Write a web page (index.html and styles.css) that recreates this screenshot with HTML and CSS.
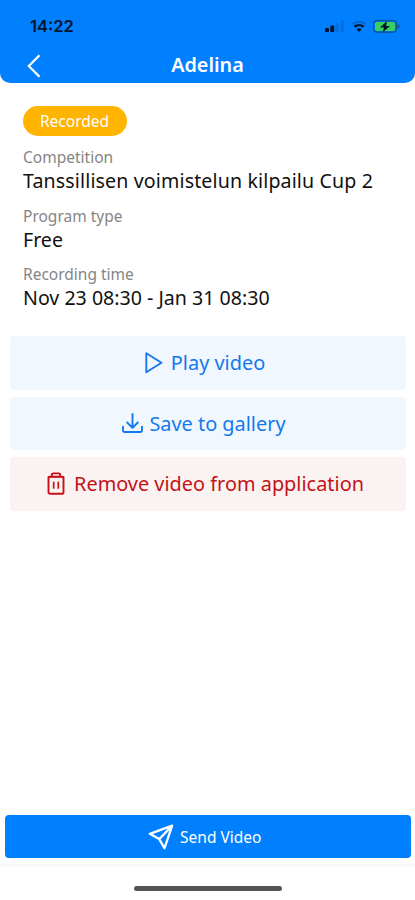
FILE: index.html
```html
<!DOCTYPE html>
<html lang="en">
<head>
<meta charset="utf-8">
<title>Adelina</title>
<link rel="stylesheet" href="styles.css">
</head>
<body>
<div class="screen">
  <header class="header">
    <div class="status">
      <span class="clock">14:22</span>
      <div class="indicators">
        <svg class="signal" width="20" height="12" viewBox="0 0 20 12">
          <rect x="0" y="8" width="4" height="4" rx="1" fill="#03152c"/>
          <rect x="5.2" y="5.5" width="4" height="6.5" rx="1" fill="#03152c"/>
          <rect x="10.5" y="3" width="3" height="9" rx="1" fill="#0570da"/>
          <rect x="15.7" y="0" width="3" height="12" rx="1" fill="#0570da"/>
        </svg>
        <svg class="wifi" width="16" height="12" viewBox="0 0 16 12" fill="none">
          <path d="M1.5 4.2a10 10 0 0 1 13 0" stroke="#0765c6" stroke-width="2"/>
          <path d="M3.5 6.8a6.8 6.8 0 0 1 9 0" stroke="#03152c" stroke-width="2.4"/>
          <path d="M5.5 9.4a3.8 3.8 0 0 1 5 0L8 12z" fill="#03152c"/>
        </svg>
        <svg class="battery" width="27" height="13" viewBox="0 0 27 13">
          <rect x=".6" y=".6" width="22.8" height="11.6" rx="3.4" fill="none" stroke="#0a5298" stroke-width="1.2"/>
          <path d="M24.6 4v5q1.8-.8 1.8-2.5T24.6 4z" fill="#0a5298"/>
          <rect x="2" y="2" width="20" height="9" rx="2" fill="#35cf62"/>
          <path d="M14 1 7 7.4h4L9.8 12.2 17 6h-4z" fill="#03152c"/>
        </svg>
      </div>
    </div>
    <div class="nav">
      <svg class="back" width="14" height="24" viewBox="0 0 14 24" fill="none" stroke="#fff" stroke-width="2.2"><path d="M12.5 1.2 1.8 12l10.7 10.8"/></svg>
      <h1 class="title">Adelina</h1>
    </div>
  </header>
  <main class="content">
    <section class="details">
      <span class="badge">Recorded</span>
      <div class="field"><div class="label">Competition</div><div class="value name">Tanssillisen voimistelun kilpailu Cup 2</div></div>
      <div class="field"><div class="label">Program type</div><div class="value">Free</div></div>
      <div class="field"><div class="label">Recording time</div><div class="value">Nov 23 08:30 - Jan 31 08:30</div></div>
    </section>
    <section class="actions">
      <button class="action play">
        <svg width="18" height="22" viewBox="0 0 18 22" fill="none" stroke="currentColor" stroke-width="1.9" stroke-linejoin="round"><path d="M1.3 1.3v19L16.5 10.8z"/></svg>
        <span>Play video</span>
      </button>
      <button class="action save">
        <svg width="21" height="20" viewBox="0 0 21 20" fill="none" stroke="currentColor" stroke-width="1.9" stroke-linecap="round" stroke-linejoin="round"><path d="M10.5 1v13.8M5.2 9.5l5.3 5.4 5.3-5.4M1 13.8v3.4Q1 19 2.8 19h15.4q1.8 0 1.8-1.8v-3.4"/></svg>
        <span>Save to gallery</span>
      </button>
      <button class="action remove">
        <svg width="18" height="23" viewBox="0 0 18 23" fill="none" stroke="currentColor" stroke-width="1.9" stroke-linejoin="round"><rect x="1.5" y="4.6" width="15" height="17.2" rx="1.6"/><path d="M.8 4.9h16.4M4.8 4.6V3q0-1.6 1.5-1.6h5.4q1.5 0 1.5 1.6v1.6"/><path d="M6.7 9.8v7M11.3 9.8v7" stroke-width="1.7"/></svg>
        <span>Remove video from application</span>
      </button>
    </section>
  </main>
  <footer class="footer">
    <button class="send">
      <svg width="26" height="26" viewBox="0 0 26 26" fill="none" stroke="#fff" stroke-width="2.3" stroke-linejoin="round"><path d="M24.2 1.6 1.8 9.8l9.4 5.3 5.3 9.1zM24.2 1.6 11.2 15.1"/></svg>
      <span>Send Video</span>
    </button>
  </footer>
  <div class="home"></div>
</div>
</body>
</html>
```

FILE: styles.css
```css
* { box-sizing: border-box; }
body { margin: 0; background: #fff; font-family: "Noto Sans", sans-serif; }
svg { display: block; flex: none; }
button { border: 0; padding: 0; font: inherit; }
.screen { width: 415px; height: 900px; display: flex; flex-direction: column; overflow: hidden; }
.header { height: 83px; background: #007fff; border-radius: 0 0 10px 10px; flex: none; }
.status { height: 48px; padding: 4px 15px 0 30px; display: flex; align-items: center; justify-content: space-between; }
.clock { font: 600 16.5px/20px Inter, sans-serif; color: #03152c; }
.indicators { display: flex; align-items: center; gap: 6px; }
.nav { height: 35px; display: grid; grid-template-columns: 60px 1fr 60px; align-items: center; }
.back { margin-left: 27px; }
.title { margin: 0; text-align: center; color: #fff; font-size: 19.8px; line-height: 26px; font-weight: 600; padding-bottom: 2px; }
.content { flex: 1; }
.details { padding: 23px 23px 0; }
.badge { display: flex; align-items: center; justify-content: center; width: 104px; height: 30px; margin-bottom: 10px; padding-right: 1px; border-radius: 15px; background: #ffb400; color: #fff; font-size: 15.5px; }
.field { height: 58.5px; }
.label { font-size: 15.5px; line-height: 22px; color: #858585; }
.value { font-size: 19.6px; line-height: 26px; color: #111; white-space: nowrap; }
.name { letter-spacing: .13px; }
.actions { padding: 14.5px 9px 0 10px; display: flex; flex-direction: column; gap: 7px; }
.action { height: 53.5px; border-radius: 4px; display: flex; align-items: center; justify-content: center; gap: 8px; padding-right: 6px; font-size: 19.9px; background: #f1f7ff; color: #1478ee; }
.save { gap: 6px; padding-right: 8px; }
.remove { background: #fbf2f2; color: #c31218; gap: 9px; padding-right: 5px; }
.footer { padding: 7px 5px 6px; background: #fdfdfd; box-shadow: 0 2px 3px #f5f5f5; }
.send { width: 405.5px; height: 43.5px; border-radius: 4px; background: #007fff; color: #fff; display: flex; align-items: center; justify-content: center; gap: 6px; padding: 1px 6px 0 0; font-size: 15.5px; }
.home { width: 148px; height: 5px; margin: 22px 0 9px 134px; border-radius: 3px; background: #555; flex: none; }
```
